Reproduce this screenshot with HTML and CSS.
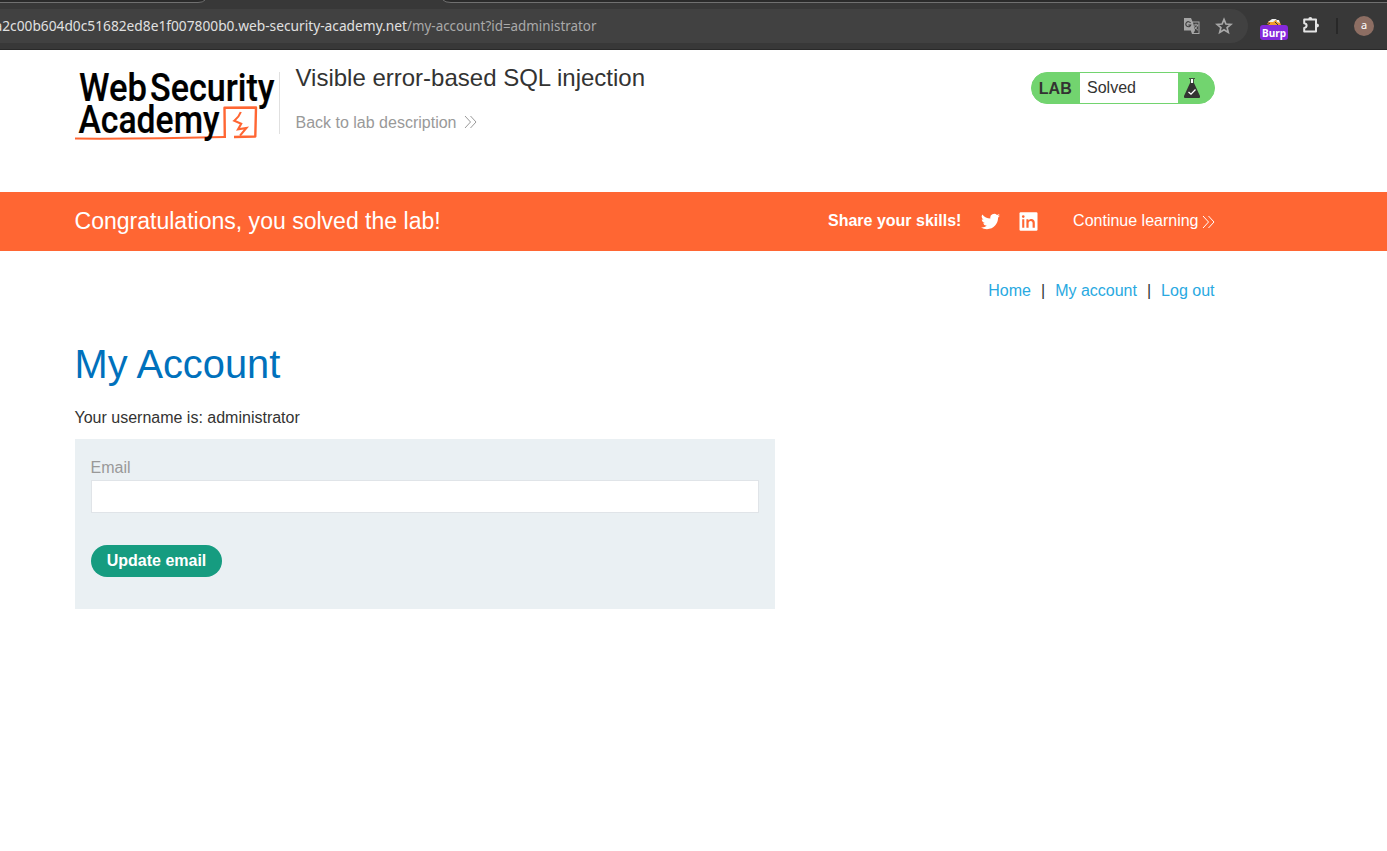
FILE: index.html
```html
<!DOCTYPE html>
<html lang="en">
<head>
<meta charset="utf-8">
<title>Visible error-based SQL injection</title>
<link rel="stylesheet" href="styles.css">
</head>
<body>
<div class="browser">
  <svg class="tabs" width="1387" height="3" viewBox="0 0 1387 3"><path d="M0 0H205Q203 2.5 198 2.5H0Z M443 0H1387V2.5H451Q445 2.5 443 0Z" fill="#2a2a2a"/><path d="M0 2.5H198Q203 2.5 205 0M443 0Q445 2.5 451 2.5H1387" fill="none" stroke="#707070"/></svg>
  <div class="toolbar">
    <div class="address">
      <svg class="url" width="600" height="34" viewBox="0 0 600 34"><text class="host" x="-5.5" y="22" textLength="412.5" lengthAdjust="spacingAndGlyphs">a2c00b604d0c51682ed8e1f007800b0.web-security-academy.net</text><text class="path" x="407" y="22" textLength="189.5" lengthAdjust="spacingAndGlyphs">/my-account?id=administrator</text></svg>
      <svg class="translate" width="18" height="18" viewBox="0 0 18 18"><path d="M1 1H8L9.5 4.5H16.5V17H9L7.8 13.5H1Z" fill="#a5a5a5"/><path d="M10 5.5H15.5V16H10.5L12 13.5Z" fill="#414141"/><path d="M7.5 6A2.5 2.5 0 1 0 7.7 8H5.3" fill="none" stroke="#414141" stroke-width="1.2"/><path d="M10.5 8H15.5M13 6.7V8M14.8 8Q13.8 11 11.2 12.6M11.5 9.3Q12.5 11.5 15 13.3" fill="none" stroke="#a5a5a5"/></svg>
      <svg class="star" width="18" height="18" viewBox="0 0 18 18"><path d="M9 2.4L10.9 7L15.9 7.4L12.1 10.6L13.3 15.4L9 12.8L4.7 15.4L5.9 10.6L2.1 7.4L7.1 7Z" fill="none" stroke="#a8a8a8" stroke-width="1.7"/></svg>
    </div>
    <div class="ext"><svg width="16" height="7" viewBox="0 0 16 7"><path d="M1 6Q3 2 8 2Q14 2 15 7H1Z" fill="#f19a2b"/><path d="M2 4L6 1H11L7 4ZM10 1L13 2L14 5L11 4Z" fill="#eee"/><path d="M1 7L4 5M9 4L12 7" stroke="#333"/></svg><span class="badge">Burp</span></div>
    <svg class="puzzle" width="20" height="20" viewBox="0 0 20 20"><path d="M3.2 4.5H15V16.5H3.2V13Q5.6 12.6 5.6 10.6T3.2 8.2Z" fill="none" stroke="#e4e4e4" stroke-width="2" stroke-linejoin="round"/><path d="M7.3 4.2Q7.3 2 9.3 2T11.3 4.2ZM15.6 8.6Q18 8.6 18 10.5T15.6 12.4Z" fill="#e4e4e4"/></svg>
    <div class="sep"></div>
    <div class="avatar">a</div>
  </div>
</div>
<header class="header">
  <svg class="logo" width="205" height="76" viewBox="0 0 205 76">
    <text class="mark" x="5" y="35" textLength="68" lengthAdjust="spacingAndGlyphs">Web</text>
    <text class="mark" x="76" y="35" textLength="124.5" lengthAdjust="spacingAndGlyphs">Security</text>
    <path d="M1 72.6Q74 73 150.5 71" fill="none" stroke="#ff6633" stroke-width="2"/>
    <path d="M150.8 72L150.5 41.8L182 41.5L181.3 70.5L160 71" fill="none" stroke="#ff6633" stroke-width="2.4" stroke-linejoin="round"/>
    <path d="M166.8 46Q165 51 160.3 54.8L167.2 57.8L164 63.4L172.4 62L166 69.6" fill="none" stroke="#ff6633" stroke-width="2.1"/>
    <text class="mark" x="4.5" y="67" textLength="141" lengthAdjust="spacingAndGlyphs">Academy</text>
  </svg>
  <div class="title">
    <h2>Visible error-based SQL injection</h2>
    <a class="back">Back to lab description <svg class="chev" width="13" height="14" viewBox="0 0 13 14"><path d="M1 1L6.5 7L1 13M6.5 1L12 7L6.5 13" fill="none" stroke="currentColor"/></svg></a>
  </div>
  <div class="status"><b>LAB</b><span>Solved</span><i><svg width="18" height="22" viewBox="0 0 18 22"><path d="M6 1.5H12M7.5 2V7M10.5 2V7" stroke="#333332" stroke-width=".8"/><path d="M8 2H10V6H8Z" fill="#fff"/><path d="M7 6H11L17 19Q17.5 21 16 21H2Q.5 21 1 19Z" fill="#333332"/><path d="M5.5 15L8 17.2L12.5 12.5" fill="none" stroke="#fff" stroke-width="1.3"/></svg></i></div>
</header>
<section class="banner">
  <h3>Congratulations, you solved the lab!</h3>
  <b>Share your skills!</b>
  <svg class="twitter" width="19" height="19" viewBox="0 0 24 24"><path fill="#fff" d="M24 4.56a9.8 9.8 0 0 1-2.83.78 4.9 4.9 0 0 0 2.17-2.73 9.9 9.9 0 0 1-3.13 1.2 4.92 4.92 0 0 0-8.38 4.48A14 14 0 0 1 1.67 3.15 4.93 4.93 0 0 0 3.2 9.72a4.9 4.9 0 0 1-2.23-.61c-.05 2.28 1.58 4.42 3.95 4.89a4.9 4.9 0 0 1-2.22.09 4.93 4.93 0 0 0 4.6 3.42A9.9 9.9 0 0 1 0 19.54a13.9 13.9 0 0 0 7.55 2.21c9.14 0 14.3-7.72 13.99-14.64A10 10 0 0 0 24 4.56z"/></svg>
  <svg class="linkedin" width="19" height="19" viewBox="0 0 19 19"><rect x=".5" y=".3" width="18" height="18.4" rx="1.2" fill="#fff"/><path d="M3.2 7.2H5.3V15.8H3.2ZM7.4 7.2H9.4V8.5C11 6.2 15.8 6.2 15.8 10.8V15.8H13.6V11.2C13.6 8.1 9.6 8.4 9.6 11.2V15.8H7.4Z" fill="#ff6633"/><circle cx="4.25" cy="4.6" r="1.3" fill="#ff6633"/></svg>
  <a class="continue">Continue learning <svg class="chev" width="13" height="14" viewBox="0 0 13 14"><path d="M1 1L6.5 7L1 13M6.5 1L12 7L6.5 13" fill="none" stroke="currentColor"/></svg></a>
</section>
<main class="main">
  <nav class="nav"><a>Home</a><span>|</span><a>My account</a><span>|</span><a>Log out</a></nav>
  <h1>My Account</h1>
  <p>Your username is: administrator</p>
  <form class="form"><label for="email">Email</label><input id="email" type="email"><button type="button">Update email</button></form>
</main>
</body>
</html>
```
FILE: styles.css
```css
* { box-sizing: border-box; }
body { margin: 0; background: #fff; color: #333332; font: 16px/20px "Liberation Sans", Arial, sans-serif; overflow: hidden; }
svg { display: block; flex: none; }
h1, h2, h3, p { margin: 0; font-weight: 400; }
.browser { height: 50px; background: #383838; border-bottom: 1px solid #292929; }
.toolbar { display: flex; height: 46px; padding-top: 6px; }
.address { display: flex; align-items: center; width: 1248px; height: 34px; background: #414141; border-radius: 0 17px 17px 0; }
.url { font-family: "Noto Sans", sans-serif; font-size: 14px; }
.host { fill: #e0e0e0; }
.path { fill: #aaa; }
.translate { margin-left: 583px; }
.star { margin-left: 14px; }
.ext { display: flex; flex-direction: column; align-items: center; width: 28px; margin: 9px 0 0 12px; }
.badge { width: 28px; height: 15px; border-radius: 3px; background: #8529db; color: #fff; font: bold 10px/16px "Noto Sans", sans-serif; text-align: center; }
.puzzle { margin: 6px 0 0 13px; }
.sep { width: 2px; height: 16px; margin: 9px 0 0 15px; background: #282828; }
.avatar { width: 20px; height: 20px; margin: 7px 0 0 16px; border-radius: 50%; background: #8d6e63; color: #fff; font: 11px/18px "Noto Sans", sans-serif; text-align: center; }
.header { display: flex; height: 142px; padding: 16px 172px 0 74px; }
.mark { font-family: Roboto, sans-serif; font-weight: 500; font-size: 38px; fill: #000; stroke: #000; stroke-width: .2px; }
.title { flex: 1; height: 62px; margin-top: 6px; padding-left: 15.5px; border-left: 1px solid #e0e0e0; }
.title h2 { font-size: 24px; line-height: 28px; margin-top: -8px; }
.back { display: flex; align-items: center; gap: 7.5px; margin-top: 21px; color: #999; }
.back .chev { margin-bottom: 2px; }
.status { display: flex; width: 184px; height: 32px; margin-top: 6px; border: 1px solid #72d46f; border-radius: 16px; background: #72d46f; overflow: hidden; line-height: 30px; }
.status b { width: 48px; padding-left: 6.8px; line-height: 32px; }
.status span { width: 98px; padding-left: 7px; background: #fff; }
.status i { padding: 4px 0 0 5px; }
.banner { display: flex; align-items: center; height: 59px; padding: 0 172px 2px 74.5px; background: #ff6633; color: #fff; }
.banner h3 { width: 753.5px; font-size: 23.04px; }
.twitter { margin: 2px 0 0 20px; }
.linkedin { margin: 2px 0 0 19px; }
.continue { display: flex; align-items: center; gap: 3.5px; margin-left: auto; white-space: nowrap; }
.continue .chev { margin-top: 3px; }
.main { padding: 30px 172.5px 0 74.5px; }
.nav { display: flex; justify-content: flex-end; gap: 10px; color: #29a9e1; }
.nav span { color: #333332; }
.main h1 { margin-top: 40px; font-size: 39.8px; line-height: 46px; color: #0071bc; }
.main p { margin-top: 21px; }
.form { width: 700px; height: 170px; margin: 11px 0 0 .5px; padding: 19px 16px; background: #eaf0f3; }
.form label { display: block; margin-left: -.5px; color: #999; }
.form input { display: block; width: 668px; height: 33px; margin-top: 2px; border: 1px solid #e0e4e8; background: #fff; }
.form button { width: 131px; height: 32px; margin-top: 32px; padding: 0; border: 0; border-radius: 16px; background: #169c80; color: #fff; font: bold 16px/30px "Liberation Sans", Arial, sans-serif; }
```
